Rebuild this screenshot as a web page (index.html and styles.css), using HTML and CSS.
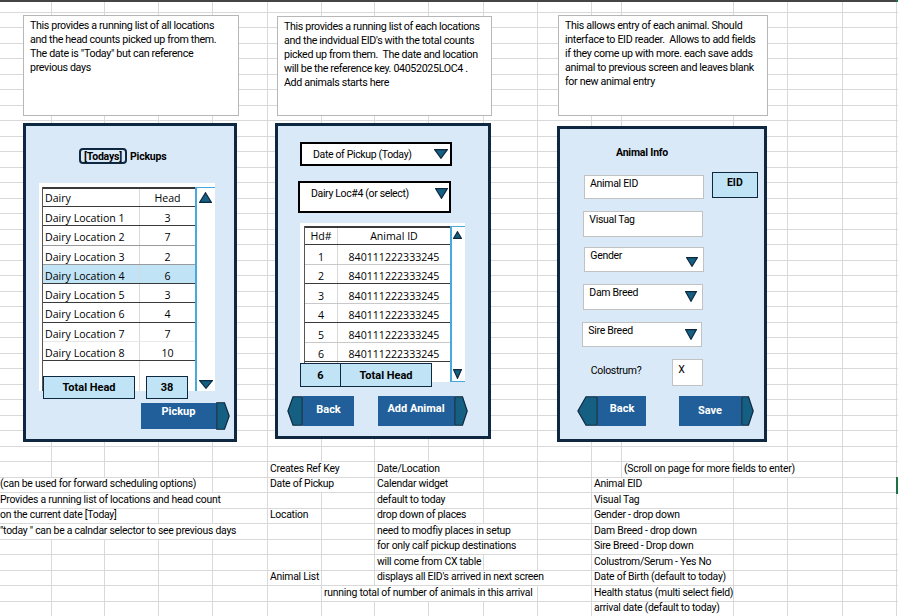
FILE: index.html
```html
<!DOCTYPE html>
<html lang="en">
<head>
<meta charset="utf-8">
<title>Calf Pickup Mockup</title>
<link rel="stylesheet" href="styles.css">
</head>
<body>
<div class="sheet">
  <div class="col k1"></div><div class="col k2"></div><div class="col k3"></div><div class="col k4"></div>
  <div class="col k5"></div><div class="col k6"></div><div class="col k7"></div><div class="col k8"></div>
  <div class="col k9"></div><div class="col k10"></div><div class="col k11"></div><div class="col k12"></div>
  <div class="col k13"></div><div class="col k14"></div><div class="col k15"></div><div class="col k16"></div>

  <div class="cell r31 cF s2">Creates Ref Key</div>
  <div class="cell r31 cH s2">Date/Location</div>
  <div class="cell r31 cM s3">(Scroll on page for more fields to enter)</div>

  <div class="cell r32 cA s4">(can be used for forward scheduling options)</div>
  <div class="cell r32 cF s2">Date of Pickup</div>
  <div class="cell r32 cH s2">Calendar widget</div>
  <div class="cell r32 cL s2">Animal EID</div>
  <div class="active r32"></div>

  <div class="cell r33 cA s5">Provides a running list of locations and head count</div>
  <div class="cell r33 cH s2">default to today</div>
  <div class="cell r33 cL s2">Visual Tag</div>

  <div class="cell r34 cA s3">on the current date [Today]</div>
  <div class="cell r34 cF s1">Location</div>
  <div class="cell r34 cH s2">drop down of places</div>
  <div class="cell r34 cL s2">Gender - drop down</div>

  <div class="cell r35 cA s5">"today " can be a calndar selector to see previous days</div>
  <div class="cell r35 cH s3">need to modfiy places in setup</div>
  <div class="cell r35 cL s2">Dam Breed - drop down</div>

  <div class="cell r36 cH s3">for only calf pickup destinations</div>
  <div class="cell r36 cL s2">Sire Breed - Drop down</div>

  <div class="cell r37 cH s2">will come from CX table</div>
  <div class="cell r37 cL s2">Colustrom/Serum - Yes No</div>

  <div class="cell r38 cF s1">Animal List</div>
  <div class="cell r38 cH s4">displays all EID's arrived in next screen</div>
  <div class="cell r38 cL s2">Date of Birth (default to today)</div>

  <div class="cell r39 cG s4">running total of number of animals in this arrival</div>
  <div class="cell r39 cL s2">Health status (multi select field)</div>

  <div class="cell r40 cL s2">arrival date (default to today)</div>
</div>

<div class="topline"><span class="topsel"></span></div>

<div class="note n1">This provides a running list of all locations<br>and the head counts picked up from them.<br>The date is "Today" but can reference<br>previous days</div>
<div class="note n2">This provides a running list of each locations<br>and the indvidual EID's with the total counts<br>picked up from them.&nbsp; The date and location<br>will be the reference key. 04052025LOC4 .<br>Add animals starts here</div>
<div class="note n3">This allows entry of each animal. Should<br>interface to EID reader.&nbsp; Allows to add fields<br>if they come up with more. each save adds<br>animal to previous screen and leaves blank<br>for new animal entry</div>

<!-- Screen 1 -->
<div class="panel p1">
  <div class="p1-title"><span class="todays">[Todays]</span><span class="p1-pick">Pickups</span></div>
  <div class="list1">
    <div class="grid1">
      <div class="row1 hdr1"><span class="nm">Dairy</span><span class="hd">Head</span></div>
      <div class="row1"><span class="nm">Dairy Location 1</span><span class="hd">3</span></div>
      <div class="row1 lt"><span class="nm">Dairy Location 2</span><span class="hd">7</span></div>
      <div class="row1 lt"><span class="nm">Dairy Location 3</span><span class="hd">2</span></div>
      <div class="row1 sel"><span class="nm">Dairy Location 4</span><span class="hd">6</span></div>
      <div class="row1"><span class="nm">Dairy Location 5</span><span class="hd">3</span></div>
      <div class="row1"><span class="nm">Dairy Location 6</span><span class="hd">4</span></div>
      <div class="row1 faint"><span class="nm">Dairy Location 7</span><span class="hd">7</span></div>
      <div class="row1"><span class="nm">Dairy Location 8</span><span class="hd">10</span></div>
      <div class="row1 fill"><span class="nm"></span><span class="hd"></span></div>
    </div>
    <div class="scroll1">
      <svg class="tri-up1" viewBox="0 0 13 11"><polygon points="6.5,0.8 12.3,10.3 0.7,10.3"/></svg>
      <svg class="tri-dn1" viewBox="0 0 14 9"><polygon points="0.7,0.7 13.3,0.7 7,8.3"/></svg>
    </div>
  </div>
  <div class="totals1"><div class="tot">Total Head</div><div class="tot num">38</div></div>
  <div class="btnrow1">
    <div class="btn b-pickup">Pickup</div>
    <svg class="tab tab-r1" viewBox="0 0 14 28"><polygon points="0.75,0.75 8.5,0.75 13.2,14 8.5,27.25 0.75,27.25"/></svg>
  </div>
</div>

<!-- Screen 2 -->
<div class="panel p2">
  <div class="dd dd1"><span>Date of Pickup (Today)</span><svg class="tri-dd1" viewBox="0 0 14 10"><polygon points="0.7,0.7 13.3,0.7 7,9.3"/></svg></div>
  <div class="dd dd2"><span>Dairy Loc#4 (or select)</span><svg class="tri-dd2" viewBox="0 0 13 11"><polygon points="0.7,0.7 12.3,0.7 6.5,10.3"/></svg></div>
  <div class="list2">
    <div class="grid2">
      <div class="row2 hdr2"><span class="hn">Hd#</span><span class="aid">Animal ID</span></div>
      <div class="row2 lt2"><span class="hn">1</span><span class="aid">840111222333245</span></div>
      <div class="row2"><span class="hn">2</span><span class="aid">840111222333245</span></div>
      <div class="row2 lt2"><span class="hn">3</span><span class="aid">840111222333245</span></div>
      <div class="row2"><span class="hn">4</span><span class="aid">840111222333245</span></div>
      <div class="row2 lt2"><span class="hn">5</span><span class="aid">840111222333245</span></div>
      <div class="row2"><span class="hn">6</span><span class="aid">840111222333245</span></div>
      <div class="row2 fill2"><span class="hn"></span><span class="aid"></span></div>
    </div>
    <div class="scroll2">
      <svg class="tri-up2" viewBox="0 0 9 8"><polygon points="4.5,0.7 8.4,7.3 0.6,7.3"/></svg>
      <svg class="tri-dn2" viewBox="0 0 9 10"><polygon points="0.6,0.7 8.4,0.7 4.5,9.3"/></svg>
    </div>
  </div>
  <div class="foot2"><div class="tot f6">6</div><div class="tot ftot">Total Head</div></div>
  <div class="btnrow2">
    <svg class="tab tab-l2" viewBox="0 0 16 30"><polygon points="15.25,0.75 6,0.75 0.9,15 6,29.25 15.25,29.25"/></svg>
    <div class="btn b-back2">Back</div>
    <div class="btn b-add">Add Animal</div>
    <svg class="tab tab-r2" viewBox="0 0 14 30"><polygon points="0.75,0.75 8.5,0.75 13.2,15 8.5,29.25 0.75,29.25"/></svg>
  </div>
</div>

<!-- Screen 3 -->
<div class="panel p3">
  <div class="title3">Animal Info</div>
  <div class="eidrow">
    <div class="field f-eid"><span>Animal EID</span></div>
    <div class="eidbtn">EID</div>
  </div>
  <div class="field f-vt"><span>Visual Tag</span></div>
  <div class="field f-gender"><span>Gender</span><svg class="tri3 t-gender" viewBox="0 0 12 10"><polygon points="0.6,0.7 11.4,0.7 6,9.3"/></svg></div>
  <div class="field f-dam"><span>Dam Breed</span><svg class="tri3 t-dam" viewBox="0 0 12 11"><polygon points="0.6,0.7 11.4,0.7 6,10.3"/></svg></div>
  <div class="field f-sire"><span>Sire Breed</span><svg class="tri3 t-sire" viewBox="0 0 12 11"><polygon points="0.6,0.7 11.4,0.7 6,10.3"/></svg></div>
  <div class="colo"><span class="colo-lbl">Colostrum?</span><div class="field xbox"><span>X</span></div></div>
  <div class="btnrow3">
    <svg class="tab tab-l3" viewBox="0 0 21 30"><polygon points="20.25,0.75 9,0.75 0.9,15 9,29.25 20.25,29.25"/></svg>
    <div class="btn b-back3">Back</div>
    <div class="btn b-save">Save</div>
    <svg class="tab tab-r3" viewBox="0 0 13 30"><polygon points="0.75,0.75 7.5,0.75 12.2,15 7.5,29.25 0.75,29.25"/></svg>
  </div>
</div>
</body>
</html>
```

FILE: styles.css
```css
* { box-sizing: border-box; }
html, body { margin: 0; padding: 0; }
body {
  width: 898px;
  height: 616px;
  overflow: hidden;
  position: relative;
  background: #ffffff;
  color: #000;
  font-family: Roboto, "Liberation Sans", sans-serif;
}

/* ---------- spreadsheet grid ---------- */
.sheet {
  display: grid;
  grid-template-columns: 52px 53px 54px 54px 55px 54px 53px 54px 55px 54px 54px 30px 112px 54px 55px 54px 1fr;
  grid-template-rows: 13px repeat(20, 15px 16px);
  width: 898px;
  height: 616px;
  background-image: repeating-linear-gradient(to bottom, #d9d9d9 0 1px, transparent 1px 15px, #d9d9d9 15px 16px, transparent 16px 31px);
  background-size: 100% 620px;
  background-position: 0 12px;
}
.col { grid-row: 1 / -1; border-right: 1px solid #d9d9d9; }
.k1 { grid-column: 1; }
.k2 { grid-column: 2; }
.k3 { grid-column: 3; }
.k4 { grid-column: 4; }
.k5 { grid-column: 5; }
.k6 { grid-column: 6; }
.k7 { grid-column: 7; }
.k8 { grid-column: 8; }
.k9 { grid-column: 9; }
.k10 { grid-column: 10; }
.k11 { grid-column: 11; }
.k12 { grid-column: 12; }
.k13 { grid-column: 13; }
.k14 { grid-column: 14; }
.k15 { grid-column: 15; }
.k16 { grid-column: 16; }

.cell {
  background: #fff;
  margin: 0 1px 1px 0;
  font-size: 10.4px;
  letter-spacing: -0.25px;
  line-height: 12px;
  white-space: nowrap;
  padding: 0 0 2px 2px;
  display: flex;
  align-items: flex-end;
}
.cA { grid-column-start: 1; padding-left: 0; }
.cF { grid-column-start: 6; }
.cG { grid-column-start: 7; }
.cH { grid-column-start: 8; }
.cL { grid-column-start: 12; }
.cM { grid-column-start: 13; }
.s1 { grid-column-end: span 1; }
.s2 { grid-column-end: span 2; }
.s3 { grid-column-end: span 3; }
.s4 { grid-column-end: span 4; }
.s5 { grid-column-end: span 5; }
.r31 { grid-row: 31; }
.r32 { grid-row: 32; }
.r33 { grid-row: 33; }
.r34 { grid-row: 34; }
.r35 { grid-row: 35; }
.r36 { grid-row: 36; }
.r37 { grid-row: 37; }
.r38 { grid-row: 38; }
.r39 { grid-row: 39; }
.r40 { grid-row: 40; }

/* active (selected) cell in column Q, mostly off-screen */
.active {
  grid-column: 17;
  margin: -1px 0 -1px -1px;
  border: 2px solid #1e7145;
  border-right: 0;
}

.topline {
  position: absolute;
  left: 0; top: 0;
  width: 898px; height: 2px;
  background: #444;
}
.topsel {
  position: absolute;
  left: 896px; top: 0;
  width: 2px; height: 2px;
  background: #1e7145;
}

/* ---------- notes ---------- */
.note {
  position: absolute;
  background: #fff;
  border: 1px solid #b7b7b7;
  font-size: 10.7px;
  letter-spacing: -0.35px;
  line-height: 14px;
  padding: 2.6px 0 0 6px;
  white-space: nowrap;
}
.n1 { left: 23px; top: 15px; width: 216px; height: 101px; }
.n2 { left: 277px; top: 16px; width: 215px; height: 100px; }
.n3 { left: 558px; top: 15px; width: 210px; height: 101px; }

/* ---------- panels ---------- */
.panel {
  position: absolute;
  background: #dae9f7;
  border: 3px solid #0e2841;
  display: flex;
  flex-direction: column;
  align-items: flex-start;
}
.p1 { left: 23px; top: 123px; width: 214px; height: 319px; }
.p2 { left: 275px; top: 123px; width: 216px; height: 316px; }
.p3 { left: 557px; top: 126px; width: 210px; height: 316px; }

svg polygon { fill: #156082; stroke: #0e2841; stroke-width: 1.2; stroke-linejoin: miter; }

/* screen 1 */
.p1-title {
  margin: 22px 0 0 53px;
  height: 16px;
  display: flex;
  align-items: center;
  font-weight: 700;
  font-size: 10.5px;
  letter-spacing: -0.2px;
}
.todays {
  width: 48px;
  height: 16px;
  border: 2px solid #0e2841;
  border-radius: 4px;
  display: flex;
  align-items: center;
  justify-content: center;
}
.p1-pick { margin-left: 3px; }

.list1 {
  margin: 19px 0 0 13px;
  width: 176px;
  height: 208px;
  background: #fff;
  display: flex;
  padding: 4px 0 0 3px;
}
.grid1 {
  width: 153px;
  border-left: 1px solid #555;
  display: flex;
  flex-direction: column;
  font-family: "Open Sans", sans-serif;
  font-size: 10.6px;
}
.row1 {
  height: 19.3px;
  flex: none;
  display: flex;
  border-bottom: 1px solid #3a3a3a;
  line-height: 13px;
  padding-top: 5px;
}
.row1 .nm { width: 97px; border-right: 1px solid #d9d9d9; padding-left: 2px; margin-top: -5px; padding-top: 5px; white-space: nowrap; }
.row1 .hd { flex: 1; text-align: center; }
.hdr1 { height: 20px; border-top: 2px solid #3a3a3a; padding-top: 3.4px; }
.hdr1 .nm { margin-top: -3.4px; padding-top: 3.4px; }
.row1.lt { border-bottom-color: #9a9a9a; }
.row1.faint { border-bottom-color: #e8e8e8; }
.row1.sel { background: #c0e4f5; }
.row1.fill { flex: 1; border-bottom: 0; }

.scroll1 {
  width: 20px;
  border-left: 2px solid #48a9de;
  border-top: 1px solid #48a9de;
  display: flex;
  flex-direction: column;
  justify-content: space-between;
  padding: 4px 0 2.5px 2px;
}
.tri-up1 { width: 13px; height: 11px; display: block; }
.tri-dn1 { width: 14px; height: 9px; display: block; }

.totals1 {
  position: relative;
  display: flex;
  margin: -15px 0 0 17px;
}
.tot {
  width: 92px;
  height: 23px;
  background: #c0e4f5;
  border: 1px solid #0e2841;
  display: flex;
  align-items: center;
  justify-content: center;
  font-weight: 700;
  font-size: 11px;
}
.tot.num { width: 42px; margin-left: 11px; }

.btnrow1 { display: flex; align-items: flex-start; margin: 4px 0 0 115px; }
.btn {
  background: #215f9a;
  color: #fff;
  font-weight: 700;
  font-size: 11px;
  line-height: 14px;
  display: flex;
  justify-content: center;
  align-items: flex-start;
  white-space: nowrap;
}
.b-pickup { width: 75px; height: 26px; padding-top: 2px; }
.tab { display: block; flex: none; }
.tab-r1 { width: 14px; height: 28px; margin-top: -1px; }

/* screen 2 */
.dd {
  background: #fff;
  border: 2px solid #000;
  display: flex;
  align-items: center;
  justify-content: space-between;
  font-size: 10.5px;
  letter-spacing: -0.35px;
  white-space: nowrap;
}
.dd1 { margin: 16px 0 0 22px; width: 152px; height: 24px; padding: 0 2px 0 11px; }
.dd2 { margin: 15px 0 0 20px; width: 153px; height: 32px; padding: 0 1px 7px 11px; }
.tri-dd1 { width: 14px; height: 10px; display: block; }
.tri-dd2 { width: 13px; height: 11px; display: block; }

.list2 {
  margin: 10px 0 0 22px;
  width: 165px;
  height: 159px;
  background: #fff;
  display: flex;
  padding: 3px 0 0 4px;
}
.grid2 {
  width: 146px;
  border-left: 1px solid #555;
  display: flex;
  flex-direction: column;
  font-family: "Open Sans", sans-serif;
  font-size: 10.6px;
}
.row2 {
  height: 19.5px;
  flex: none;
  display: flex;
  border-bottom: 1px solid #3a3a3a;
  line-height: 13px;
}
.row2 .hn { width: 33px; border-right: 1px solid #d9d9d9; text-align: center; padding-top: 5.7px; }
.row2 .aid { flex: 1; text-align: center; padding-top: 5.7px; }
.hdr2 { height: 19.3px; border-top: 2px solid #3a3a3a; }
.hdr2 .hn, .hdr2 .aid { padding-top: 1.7px; }
.row2.lt2 { border-bottom-color: #c8c8c8; }
.row2.fill2 { flex: 1; border-bottom: 0; }

.scroll2 {
  width: 15px;
  border-left: 2px solid #48a9de;
  border-top: 1px solid #48a9de;
  border-bottom: 1px solid #48a9de;
  display: flex;
  flex-direction: column;
  justify-content: space-between;
  padding: 4px 0 2px 1.3px;
}
.tri-up2 { width: 9px; height: 8px; display: block; }
.tri-dn2 { width: 9px; height: 10px; display: block; }

.foot2 { position: relative; display: flex; margin: -19px 0 0 22px; }
.f6 { width: 41px; height: 24px; }
.ftot { width: 92px; height: 24px; margin-left: -1px; }

.btnrow2 { display: flex; align-items: flex-start; margin: 9px 0 0 9px; }
.tab-l2 { width: 16px; height: 30px; }
.b-back2 { width: 51px; height: 30px; padding-top: 7px; }
.b-add { width: 76px; height: 30px; margin-left: 24px; padding-top: 6.4px; }
.tab-r2 { width: 14px; height: 30px; }

/* screen 3 */
.title3 {
  margin: 16.5px 0 0 56px;
  font-weight: 700;
  font-size: 10.5px;
  letter-spacing: -0.2px;
  line-height: 14px;
}
.eidrow { display: flex; align-items: flex-start; margin: 12.5px 0 0 24px; }
.field {
  background: #fff;
  border: 1.5px solid #c2c2c2;
  font-size: 10.5px;
  letter-spacing: -0.3px;
  line-height: 14px;
  display: flex;
  justify-content: space-between;
  align-items: flex-start;
  padding: 1px 4.5px 0 5px;
  white-space: nowrap;
}
.f-eid { margin-top: 3.3px; width: 119.5px; height: 24px; }
.eidbtn {
  margin-left: 8.5px;
  width: 45.7px;
  height: 25.7px;
  background: #c0e4f5;
  border: 1px solid #0e2841;
  font-weight: 700;
  font-size: 10.5px;
  line-height: 14px;
  text-align: center;
  padding-top: 3px;
}
.f-vt { margin: 12px 0 0 23.3px; width: 119.5px; height: 25.4px; }
.f-gender { margin: 10.6px 0 0 24.3px; width: 119.5px; height: 24.4px; }
.f-dam { margin: 12.6px 0 0 23.3px; width: 119.5px; height: 25.4px; padding-right: 4.5px; }
.f-sire { margin: 12.6px 0 0 22.3px; width: 119.5px; height: 25px; padding-right: 3.5px; }
.tri3 { display: block; width: 12px; }
.t-gender { height: 10px; margin-top: 7.4px; }
.t-dam { height: 11px; margin-top: 4.9px; }
.t-sire { height: 11px; margin-top: 4.5px; }

.colo { display: flex; align-items: flex-start; margin: 12px 0 0 30.7px; font-size: 10.5px; letter-spacing: -0.3px; line-height: 14px; }
.colo-lbl { width: 81.6px; margin-top: 4.3px; }
.xbox { width: 30.7px; height: 26.4px; padding-top: 2.8px; }

.btnrow3 { display: flex; align-items: flex-start; margin: 10.3px 0 0 17.3px; }
.tab-l3 { width: 21px; height: 30px; }
.b-back3 { width: 47.5px; height: 30px; padding-top: 6.4px; }
.b-save { width: 61.7px; height: 30px; margin-left: 33.3px; padding-top: 7.7px; }
.tab-r3 { width: 13px; height: 30px; }
```
